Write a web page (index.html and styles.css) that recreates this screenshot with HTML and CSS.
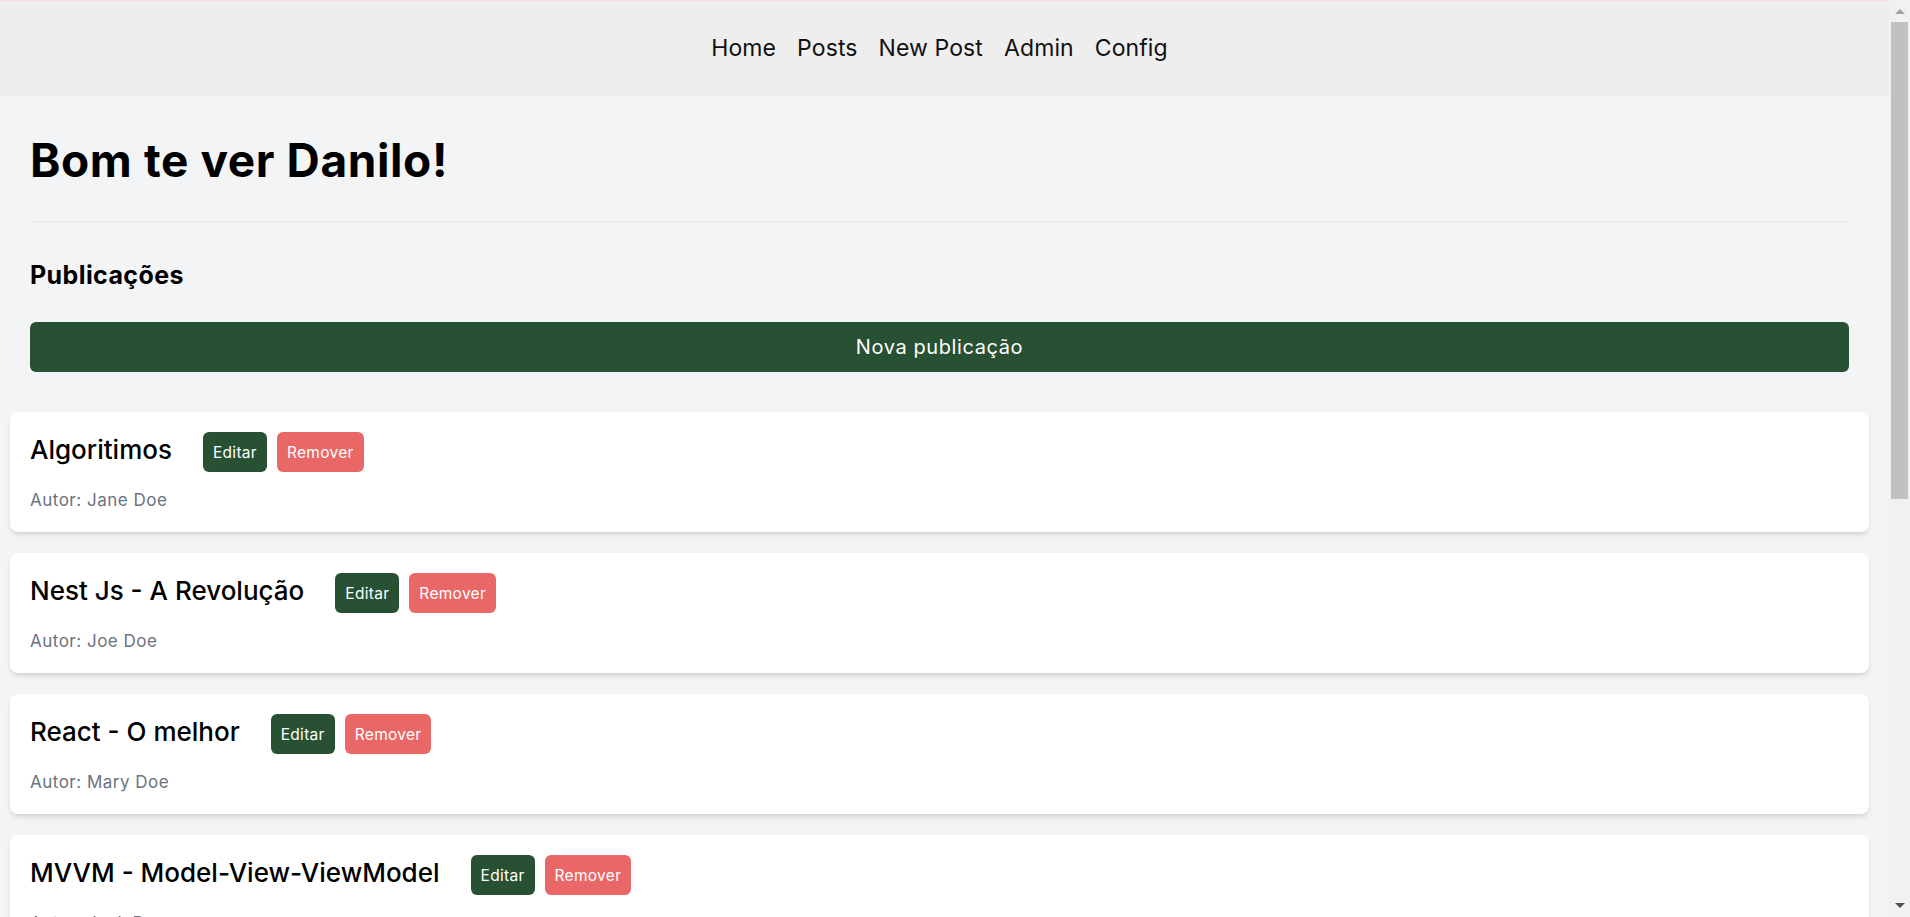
FILE: index.html
```html
<!DOCTYPE html>
<html lang="pt-BR">
<head>
<meta charset="utf-8">
<title>Blog</title>
<link rel="stylesheet" href="styles.css">
</head>
<body>
<nav class="topnav">
  <a class="navlink" href="#">Home</a>
  <a class="navlink" href="#">Posts</a>
  <a class="navlink" href="#">New Post</a>
  <a class="navlink" href="#">Admin</a>
  <a class="navlink" href="#">Config</a>
</nav>
<main class="page">
  <section class="intro">
    <h1 class="greeting">Bom te ver Danilo!</h1>
    <hr class="divider">
    <h2 class="section-title">Publicações</h2>
    <button class="btn-new">Nova publicação</button>
  </section>
  <section class="posts">
    <article class="card">
      <div class="card-row">
        <h3 class="card-title">Algoritimos</h3>
        <button class="btn btn-edit">Editar</button>
        <button class="btn btn-remove">Remover</button>
      </div>
      <p class="card-author">Autor: Jane Doe</p>
    </article>
    <article class="card">
      <div class="card-row">
        <h3 class="card-title">Nest Js - A Revolução</h3>
        <button class="btn btn-edit">Editar</button>
        <button class="btn btn-remove">Remover</button>
      </div>
      <p class="card-author">Autor: Joe Doe</p>
    </article>
    <article class="card">
      <div class="card-row">
        <h3 class="card-title">React - O melhor</h3>
        <button class="btn btn-edit">Editar</button>
        <button class="btn btn-remove">Remover</button>
      </div>
      <p class="card-author">Autor: Mary Doe</p>
    </article>
    <article class="card">
      <div class="card-row">
        <h3 class="card-title">MVVM - Model-View-ViewModel</h3>
        <button class="btn btn-edit">Editar</button>
        <button class="btn btn-remove">Remover</button>
      </div>
      <p class="card-author">Autor: Jack Doe</p>
    </article>
    <article class="card">
      <div class="card-row">
        <h3 class="card-title">TypeScript na prática</h3>
        <button class="btn btn-edit">Editar</button>
        <button class="btn btn-remove">Remover</button>
      </div>
      <p class="card-author">Autor: Jane Doe</p>
    </article>
    <article class="card">
      <div class="card-row">
        <h3 class="card-title">Clean Code</h3>
        <button class="btn btn-edit">Editar</button>
        <button class="btn btn-remove">Remover</button>
      </div>
      <p class="card-author">Autor: Joe Doe</p>
    </article>
    <article class="card">
      <div class="card-row">
        <h3 class="card-title">Docker para iniciantes</h3>
        <button class="btn btn-edit">Editar</button>
        <button class="btn btn-remove">Remover</button>
      </div>
      <p class="card-author">Autor: Mary Doe</p>
    </article>
    <article class="card">
      <div class="card-row">
        <h3 class="card-title">Testes automatizados</h3>
        <button class="btn btn-edit">Editar</button>
        <button class="btn btn-remove">Remover</button>
      </div>
      <p class="card-author">Autor: Jack Doe</p>
    </article>
    <article class="card">
      <div class="card-row">
        <h3 class="card-title">Git e GitHub</h3>
        <button class="btn btn-edit">Editar</button>
        <button class="btn btn-remove">Remover</button>
      </div>
      <p class="card-author">Autor: Jane Doe</p>
    </article>
  </section>
</main>
<div class="fake-scrollbar" aria-hidden="true">
  <div class="sb-arrow">
    <svg width="10" height="6" viewBox="0 0 10 6"><polygon points="0,6 5,1 10,6" fill="#a3a3a3"/></svg>
  </div>
  <div class="sb-thumb"></div>
  <div class="sb-space"></div>
  <div class="sb-arrow">
    <svg width="10" height="6" viewBox="0 0 10 6"><polygon points="0,0 10,0 5,5" fill="#505050"/></svg>
  </div>
</div>
</body>
</html>
```

FILE: styles.css
```css
* {
  box-sizing: border-box;
}

html {
  background: #f3f4f6;
}

body {
  margin: 0 21px 0 0;
  background: #f3f4f6;
  font-family: Inter, "Noto Sans", "Liberation Sans", sans-serif;
  color: #000;
}

.topnav {
  height: 96px;
  border-top: 1px solid #f4dde8;
  background: #eeeeee;
  display: flex;
  align-items: center;
  justify-content: center;
  gap: 21px;
  padding-right: 10px;
}

.navlink {
  color: #111;
  text-decoration: none;
  font-size: 23px;
  line-height: 1;
  font-weight: 400;
  letter-spacing: 0.1px;
}

.page {
  padding: 0 20px 20px 10px;
}

.intro {
  padding: 0 20px;
}

.greeting {
  margin: 41px 0 0;
  font-size: 46px;
  line-height: 46px;
  font-weight: 700;
  letter-spacing: 0.6px;
}

.divider {
  margin: 38px 0 0;
  border: 0;
  border-top: 1px solid #e5e7eb;
  height: 0;
}

.section-title {
  margin: 41px 0 0;
  font-size: 25px;
  line-height: 24px;
  font-weight: 700;
  letter-spacing: 0.4px;
}

.btn-new {
  display: block;
  width: 100%;
  height: 50px;
  margin-top: 35px;
  border: 0;
  border-radius: 6px;
  background: #285133;
  color: #fff;
  font-family: inherit;
  font-size: 20px;
  font-weight: 400;
  letter-spacing: 0.6px;
}

.posts {
  margin-top: 40px;
  display: flex;
  flex-direction: column;
  gap: 21px;
}

.card {
  background: #fff;
  border-radius: 8px;
  padding: 20px;
  box-shadow: 0 4px 6px -1px rgba(0, 0, 0, 0.1), 0 2px 4px -2px rgba(0, 0, 0, 0.1);
}

.card-row {
  display: flex;
  align-items: center;
  gap: 10px;
  height: 40px;
}

.card-title {
  margin: 0 21px 5px 0;
  font-size: 26px;
  line-height: 26px;
  font-weight: 500;
  letter-spacing: 0;
}

.btn {
  height: 40px;
  padding: 0 10px;
  border: 0;
  border-radius: 6px;
  color: #fff;
  font-family: inherit;
  font-size: 15.5px;
  font-weight: 400;
  letter-spacing: 0.3px;
}

.btn-edit {
  background: #285133;
}

.btn-remove {
  background: #e96767;
}

.card-author {
  margin: 16px 0 0;
  font-size: 17px;
  line-height: 24px;
  color: #6b7280;
  letter-spacing: 0.5px;
}

.fake-scrollbar {
  position: fixed;
  top: 0;
  right: 0;
  width: 21px;
  height: 100vh;
  background: #f1f1f1;
  display: flex;
  flex-direction: column;
}

.sb-arrow {
  height: 22px;
  display: flex;
  align-items: center;
  justify-content: center;
}

.sb-thumb {
  height: 477px;
  margin: 0 2px;
  background: #c1c1c1;
}

.sb-space {
  flex: 1;
}
```
